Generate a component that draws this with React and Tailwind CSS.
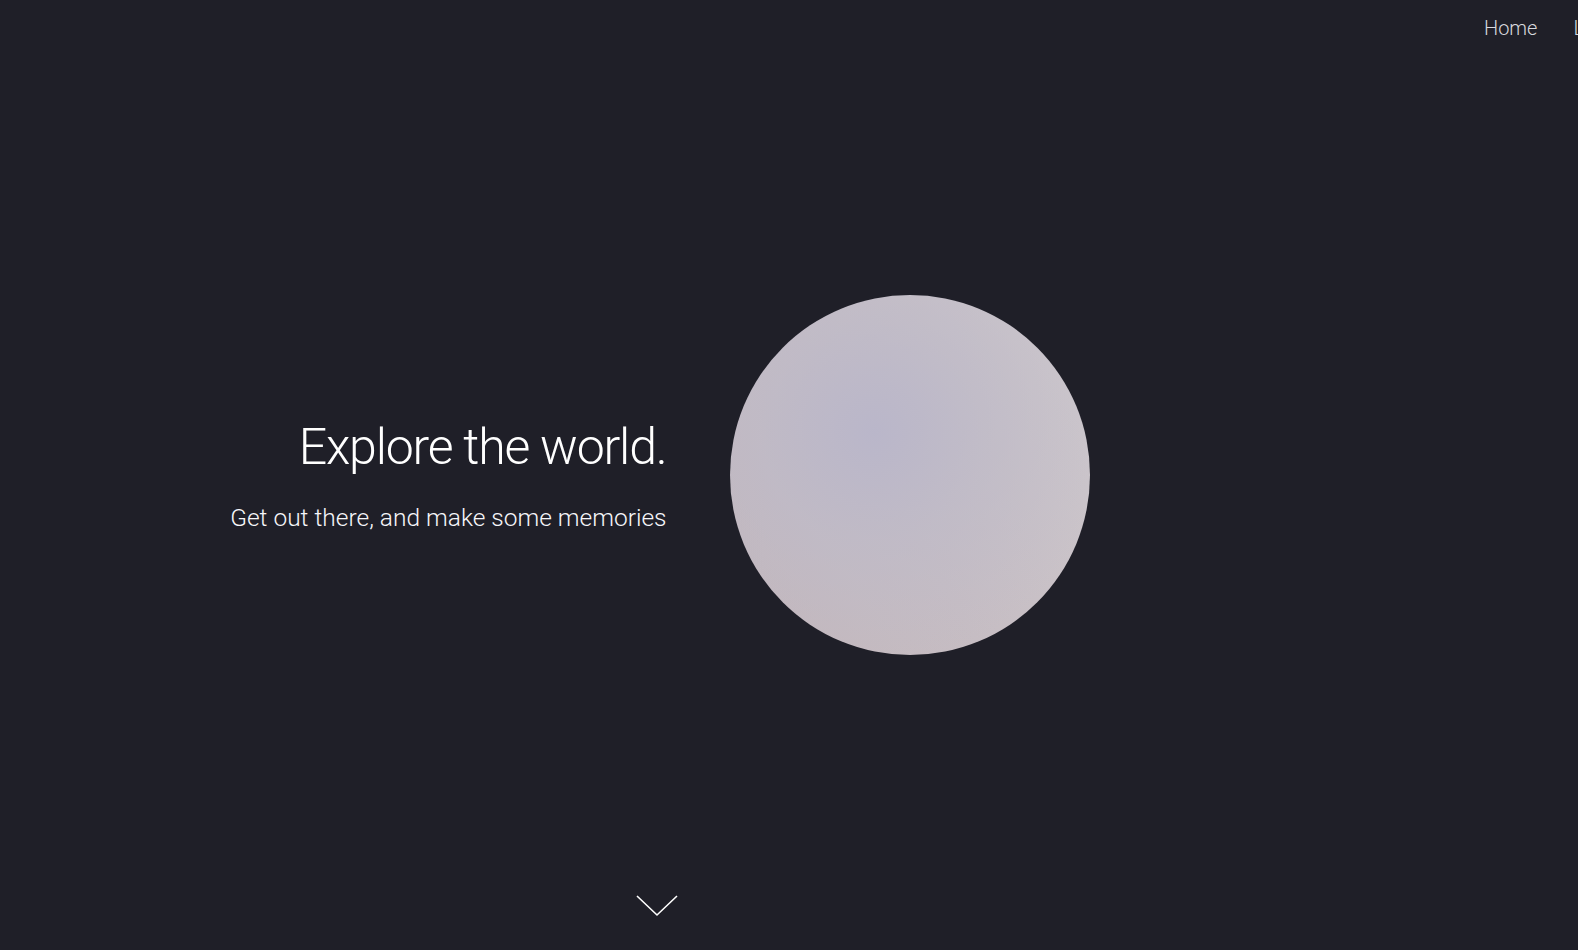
const NAV_LINKS = ['Home', 'Login'];

export default function App() {
  return (
    <div className="relative h-[950px] w-full overflow-hidden bg-[#1f1f28] font-['Roboto',sans-serif] font-light text-white">
      {/* nav runs past the right edge, as in the original */}
      <nav className="absolute left-[1484px] top-[14px] flex gap-[36px] whitespace-nowrap text-[20px] text-[#d8d8de]">
        {NAV_LINKS.map((link) => (
          <a key={link} href="#" className="leading-[28px]">
            {link}
          </a>
        ))}
      </nav>

      <main className="flex h-full w-[1314px] flex-col">
        <section className="flex flex-1 items-center justify-center gap-[63px] pt-[54px]">
          <div className="flex w-[442px] flex-col items-end text-right">
            <h1 className="text-[50px] leading-[60px] tracking-[-1.2px]">Explore the world.</h1>
            <p className="mt-[26px] text-[24.5px] leading-[30px] text-[#f6f6fa]">
              Get out there, and make some memories
            </p>
          </div>
          <div className="h-[360px] w-[360px] shrink-0 rounded-full bg-[radial-gradient(circle_at_40%_38%,rgba(185,182,202,0.95)_0%,rgba(190,186,200,0.7)_35%,rgba(200,190,196,0)_75%),linear-gradient(60deg,#c2b6bb_0%,#c6bdc3_45%,#cec9ce_100%)]" />
        </section>

        <div className="flex justify-center pb-[33px]">
          <svg width="42" height="22" viewBox="0 0 42 22" fill="none" className="text-white">
            <path d="M1 1 L21 20 L41 1" stroke="currentColor" strokeWidth="1.6" />
          </svg>
        </div>
      </main>
    </div>
  );
}
